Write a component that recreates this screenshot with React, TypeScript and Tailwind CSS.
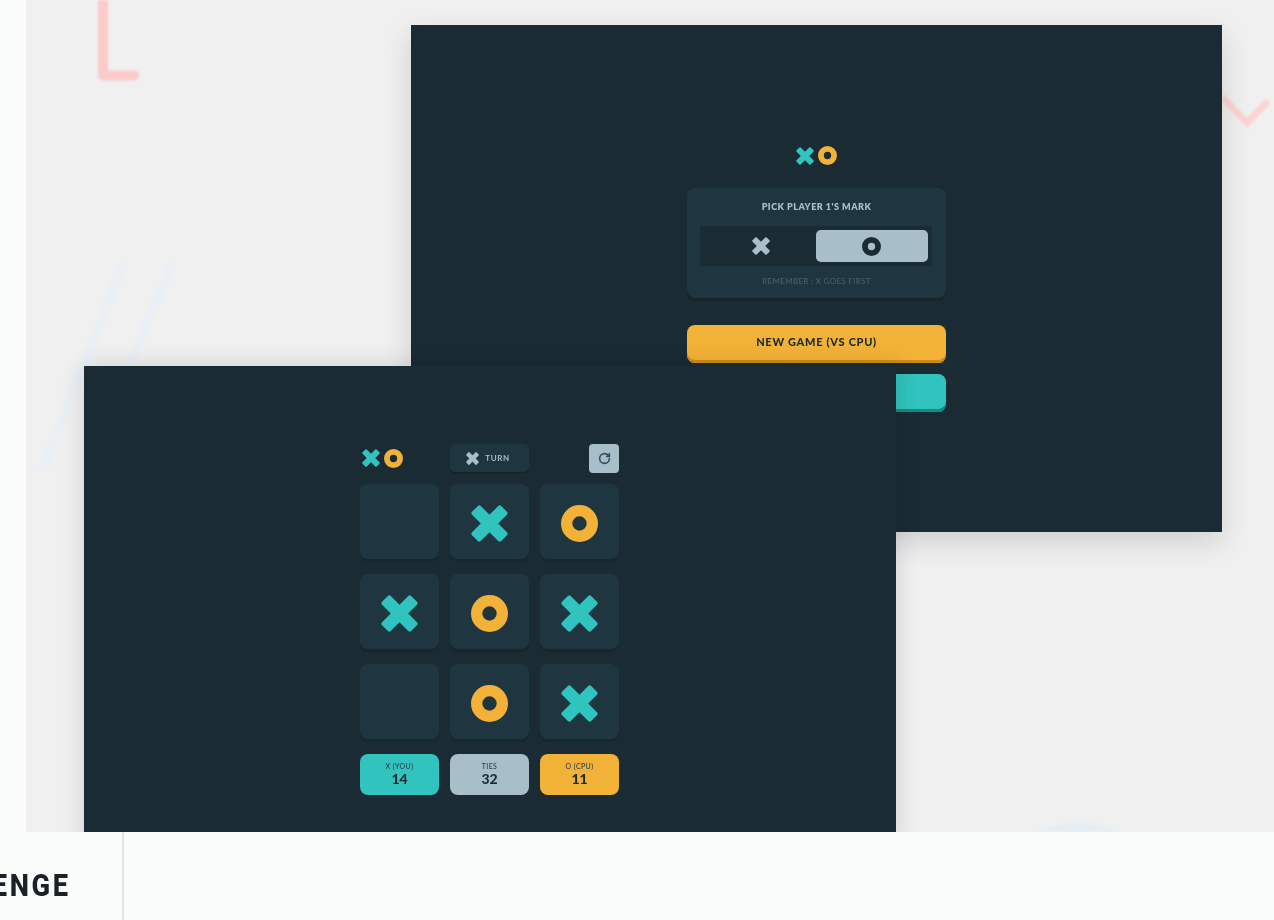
import { RotateCw } from "lucide-react";

function XMark({ size, color = "#31c3bd" }: { size: number; color?: string }) {
  return (
    <svg width={size} height={size} viewBox="0 0 36 36" className="block">
      <g fill={color} transform="rotate(45 18 18)">
        <rect x="-2" y="12" width="40" height="12" rx="2" />
        <rect x="12" y="-2" width="12" height="40" rx="2" />
      </g>
    </svg>
  );
}

function OMark({ size, color = "#f2b137" }: { size: number; color?: string }) {
  return (
    <svg width={size} height={size} viewBox="0 0 36 36" className="block">
      <circle cx="18" cy="18" r="12.5" fill="none" stroke={color} strokeWidth="11" />
    </svg>
  );
}

function Logo() {
  return (
    <div className="flex items-center gap-[4px]">
      <XMark size={18} />
      <OMark size={19} />
    </div>
  );
}

function Cell({ mark }: { mark?: "x" | "o" }) {
  return (
    <div className="flex h-[75px] items-center justify-center rounded-[8px] bg-[#1f3641] pt-[3px] shadow-[0_3px_0_#16272f]">
      {mark === "x" && <XMark size={37} />}
      {mark === "o" && <OMark size={37} />}
    </div>
  );
}

function Score({ label, value, bg }: { label: string; value: string; bg: string }) {
  return (
    <div className={`flex h-[41px] flex-col items-center justify-center rounded-[8px] ${bg}`}>
      <span className="text-[7px] leading-[9px] font-medium tracking-[0.4px] text-[#28404c]">{label}</span>
      <span className="text-[14px] leading-[16px] font-black text-[#1b2b33]">{value}</span>
    </div>
  );
}

const cells: ("x" | "o" | undefined)[] = [undefined, "x", "o", "x", "o", "x", undefined, "o", "x"];

export default function App() {
  return (
    <div className="h-[920px] w-[1274px] overflow-hidden bg-[#fafbfb] font-['Lato',sans-serif]">
      <div className="relative ml-[26px] h-[832px] overflow-hidden bg-[#f0f0f0]">
        <svg className="absolute inset-0 blur-[0.8px]" width="1248" height="832" viewBox="26 0 1248 832" fill="none">
          <path d="M103 0V75.5H134" stroke="#fdcaca" strokeWidth="10" strokeLinecap="round" strokeLinejoin="round" />
          <path d="M1222 97L1247 123L1268 101" stroke="#fcd3d5" strokeWidth="7" />
          <path d="M124 263L42 470" stroke="#e9eff4" strokeWidth="9" />
          <path d="M173 263L126 372" stroke="#e9eff4" strokeWidth="9" />
          <circle cx="1077" cy="915" r="93" fill="#e6eef4" />
        </svg>

        {/* start screen window */}
        <div className="absolute top-[25px] left-[385px] flex h-[507px] w-[811px] flex-col items-center bg-[#1b2b33] pt-[121px] shadow-[0_10px_28px_rgba(0,0,0,0.14)] blur-[0.6px]">
          <Logo />
          <div className="mt-[23px] flex h-[110px] w-[259px] flex-col items-center rounded-[8px] bg-[#1f3641] pt-[13px] shadow-[0_3px_0_#15252d]">
            <div className="text-[9px] leading-[12px] font-extrabold tracking-[0.5px] text-[#a8bfc9]">PICK PLAYER 1&apos;S MARK</div>
            <div className="mt-[13px] mr-[2px] flex h-[40px] w-[232px] items-center justify-end rounded-[4px] bg-[#1b2b33] pr-[4px]">
              <div className="flex flex-1 items-center justify-center pl-[6px]">
                <XMark size={18} color="#a8bfc9" />
              </div>
              <div className="flex h-[32px] w-[112px] items-center justify-center rounded-[5px] bg-[#a8bfc9]">
                <OMark size={19} color="#1b2b33" />
              </div>
            </div>
            <div className="mt-[9px] text-[8px] leading-[12px] font-medium tracking-[0.3px] text-[#46606c]">REMEMBER : X GOES FIRST</div>
          </div>
          <div className="mt-[27px] flex h-[38px] w-[259px] items-center justify-center rounded-[8px] bg-[#f2b137] pb-[3px] text-[11px] font-black tracking-[0.7px] text-[#1b2b33] shadow-[inset_0_-3px_0_#cc8b13]">
            NEW GAME (VS CPU)
          </div>
          <div className="mt-[11px] h-[38px] w-[259px] rounded-[8px] bg-[#31c3bd] shadow-[inset_0_-3px_0_#118c87]" />
        </div>

        {/* game board window */}
        <div className="absolute top-[366px] left-[58px] h-[480px] w-[812px] bg-[#1b2b33] pt-[78px] pl-[276px] shadow-[0_0_22px_rgba(0,0,0,0.14)] blur-[0.6px]">
          <div className="grid w-[259px] grid-cols-[79px_79px_79px] gap-x-[11px]">
            <div className="flex h-[28px] items-center pl-[2px]">
              <Logo />
            </div>
            <div className="flex h-[28px] items-center justify-center gap-[6px] rounded-[5px] bg-[#1f3641] pr-[3px] shadow-[0_2px_0_#15252d]">
              <XMark size={13} color="#a8bfc9" />
              <span className="text-[8px] font-bold tracking-[0.6px] text-[#a8bfc9]">TURN</span>
            </div>
            <div className="flex justify-end">
              <div className="flex h-[29px] w-[30px] items-center justify-center rounded-[4px] bg-[#a8bfc9]">
                <RotateCw size={13} strokeWidth={3} color="#33505e" />
              </div>
            </div>
          </div>
          <div className="mt-[11px] grid w-[259px] grid-cols-[79px_79px_79px] gap-x-[11px] gap-y-[15px]">
            {cells.map((m, i) => (
              <Cell key={i} mark={m} />
            ))}
          </div>
          <div className="mt-[15px] grid w-[259px] grid-cols-[79px_79px_79px] gap-x-[11px]">
            <Score label="X (YOU)" value="14" bg="bg-[#31c3bd]" />
            <Score label="TIES" value="32" bg="bg-[#a8bfc9]" />
            <Score label="O (CPU)" value="11" bg="bg-[#f2b137]" />
          </div>
        </div>
      </div>

      <div className="flex h-[88px]">
        <div className="flex h-full w-[124px] items-center justify-end overflow-hidden border-r-2 border-[#dfe8e8] pr-[51px]">
          <span className="origin-right scale-x-[0.88] pt-[21px] font-['Roboto',sans-serif] text-[31px] font-extrabold tracking-[3px] whitespace-nowrap text-[#1b2227]">CHALLENGE</span>
        </div>
      </div>
    </div>
  );
}
